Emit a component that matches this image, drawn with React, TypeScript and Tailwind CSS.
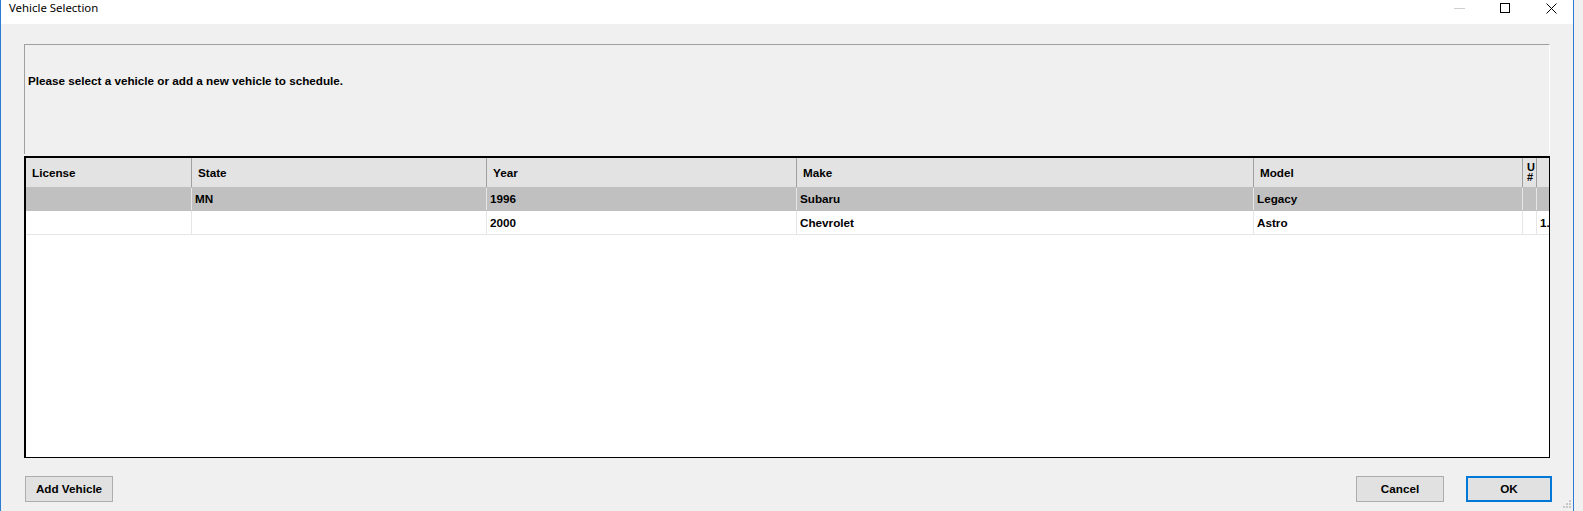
import React from "react";

const cols = [
  { key: "license", label: "License", w: "w-[166px]" },
  { key: "state", label: "State", w: "w-[295px]" },
  { key: "year", label: "Year", w: "w-[310px]" },
  { key: "make", label: "Make", w: "w-[457px]" },
  { key: "model", label: "Model", w: "w-[269px]" },
];

const rows = [
  { license: "", state: "MN", year: "1996", make: "Subaru", model: "Legacy", extra: "", selected: true },
  { license: "", state: "", year: "2000", make: "Chevrolet", model: "Astro", extra: "1.", selected: false },
];

export default function App() {
  const sans = "font-['Liberation_Sans',Arial,sans-serif]";
  return (
    <div className="relative flex w-[1583px] h-[511px] overflow-hidden bg-[#f0f0f0]">
      <div className="flex flex-col w-[1574px] h-full border-l border-r border-[#2b7bd3] bg-[#f0f0f0]">
        {/* Title bar */}
        <div className="flex items-center h-[24px] bg-white shrink-0">
          <div className="pl-[8px] pb-[8px] text-[11.4px] leading-none text-black font-['Noto_Sans',sans-serif]">
            Vehicle Selection
          </div>
          <div className="flex-1" />
          <div className="flex items-center pb-[8px] pr-[16px]">
            <div className="w-[11px] h-[1px] bg-[#cfcfcf]" />
            <div className="ml-[35px] w-[10px] h-[10px] border border-black" />
            <svg className="ml-[36px]" width="11" height="11" viewBox="0 0 11 11">
              <path d="M0.5 0.5 L10.5 10.5 M10.5 0.5 L0.5 10.5" stroke="black" strokeWidth="1" fill="none" />
            </svg>
          </div>
        </div>

        {/* Body */}
        <div className={`flex flex-col flex-1 pl-[23px] pr-[23px] ${sans}`}>
          {/* Message panel */}
          <div className="mt-[20px] h-[110px] flex items-start pt-[29px] border-t border-l border-[#a0a0a0] border-r border-r-white bg-[#f0f0f0]">
            <span className="pl-[3px] text-[11.7px] leading-[13px] font-bold text-black">
              Please select a vehicle or add a new vehicle to schedule.
            </span>
          </div>

          {/* Grid */}
          <div className="mt-[2px] h-[302px] flex flex-col bg-white border-black border-t-2 border-l-2 border-r border-b overflow-hidden">
            {/* Header */}
            <div className="flex h-[29px] bg-[#e3e3e3] shrink-0">
              {cols.map((c) => (
                <div
                  key={c.key}
                  className={`${c.w} shrink-0 flex items-center pl-[6px] border-r border-[#a0a0a0] text-[11.7px] font-bold text-black`}
                >
                  {c.label}
                </div>
              ))}
              <div className="w-[14px] shrink-0 overflow-hidden border-r border-[#a0a0a0] flex flex-col pt-[4px] pl-[4px] text-[11px] leading-[10px] font-bold text-black">
                <span>U</span>
                <span>#</span>
              </div>
              <div className="flex-1" />
            </div>
            {/* Rows */}
            {rows.map((r, i) => (
              <div
                key={i}
                className={`flex h-[24px] shrink-0 border-b ${r.selected ? "bg-[#c0c0c0] border-[#c0c0c0] pt-[1px]" : "bg-white border-[#e6e6e6]"}`}
              >
                {cols.map((c) => (
                  <div
                    key={c.key}
                    className={`${c.w} shrink-0 flex items-center pl-[3px] border-r border-[#e6e6e6] text-[11.7px] font-bold text-black`}
                  >
                    {(r as any)[c.key]}
                  </div>
                ))}
                <div className="w-[14px] shrink-0 border-r border-[#e6e6e6]" />
                <div className="flex-1 flex items-center pl-[3px] overflow-hidden text-[11.7px] font-bold text-black whitespace-nowrap">
                  {r.extra}
                </div>
              </div>
            ))}
          </div>

          {/* Buttons */}
          <div className="mt-[18px] flex items-center pl-[1px] -mr-[2px]">
            <button className="w-[88px] h-[26px] bg-[#e1e1e1] border border-[#adadad] text-[11.7px] font-bold text-black">
              Add Vehicle
            </button>
            <div className="flex-1" />
            <button className="w-[88px] h-[26px] bg-[#e1e1e1] border border-[#adadad] text-[11.7px] font-bold text-black">
              Cancel
            </button>
            <button className="ml-[22px] w-[86px] h-[26px] bg-[#e1e1e1] border-2 border-[#0078d7] text-[11.7px] font-bold text-black">
              OK
            </button>
          </div>
        </div>
      </div>
      {/* resize grip */}
      <svg className="absolute left-[1563px] top-[500px]" width="9" height="9" viewBox="0 0 9 9">
        <rect x="6" y="0" width="2" height="2" fill="#c8c8c8" />
        <rect x="3" y="3" width="2" height="2" fill="#c8c8c8" />
        <rect x="6" y="3" width="2" height="2" fill="#c8c8c8" />
        <rect x="0" y="6" width="2" height="2" fill="#c8c8c8" />
        <rect x="3" y="6" width="2" height="2" fill="#c8c8c8" />
        <rect x="6" y="6" width="2" height="2" fill="#c8c8c8" />
      </svg>
    </div>
  );
}
